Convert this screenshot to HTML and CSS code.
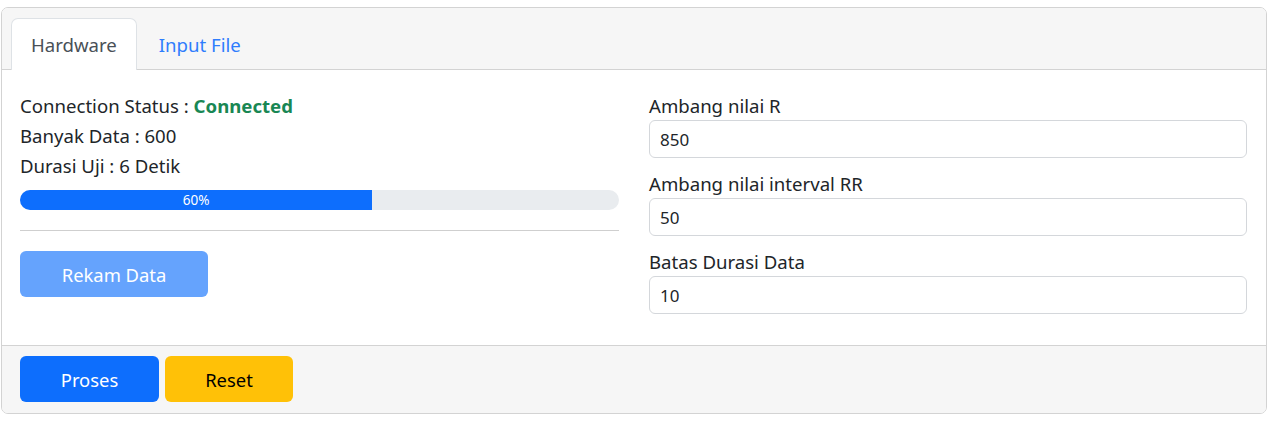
FILE: index.html
```html
<!DOCTYPE html>
<html lang="id">
<head>
<meta charset="utf-8">
<title>Hardware</title>
<link rel="stylesheet" href="styles.css">
</head>
<body>
<div class="card">
  <div class="card-header">
    <ul class="tabs">
      <li><a class="tab active" href="#">Hardware</a></li>
      <li><a class="tab" href="#">Input File</a></li>
    </ul>
  </div>
  <div class="card-body">
    <div class="col">
      <div class="line">Connection Status : <span class="ok">Connected</span></div>
      <div class="line">Banyak Data : 600</div>
      <div class="line">Durasi Uji : 6 Detik</div>
      <div class="progress"><div class="progress-bar" style="width:58.8%">60%</div></div>
      <hr class="divider">
      <button class="btn btn-primary btn-rekam disabled" type="button">Rekam Data</button>
    </div>
    <div class="col">
      <label class="label" for="r">Ambang nilai R</label>
      <input class="input" id="r" type="text" value="850">
      <label class="label" for="rr">Ambang nilai interval RR</label>
      <input class="input" id="rr" type="text" value="50">
      <label class="label" for="dur">Batas Durasi Data</label>
      <input class="input" id="dur" type="text" value="10">
    </div>
  </div>
  <div class="card-footer">
    <button class="btn btn-primary btn-proses" type="button">Proses</button>
    <button class="btn btn-warning btn-reset" type="button">Reset</button>
  </div>
</div>
</body>
</html>
```
FILE: styles.css
```css
* { box-sizing: border-box; }
body {
  margin: 7px 16px 0 1px;
  font-family: "Noto Sans", "Open Sans", sans-serif;
  font-size: 18.6px;
  color: #212529;
  background: #fff;
}
.card {
  width: 1266px;
  border: 1px solid #d3d3d3;
  border-radius: 7px;
  overflow: hidden;
}
.card-header {
  background: #f6f6f6;
  border-bottom: 1px solid #d3d3d3;
  padding: 10px 9px 0;
}
.tabs {
  list-style: none;
  margin: 0 0 -1px;
  padding: 0;
  display: flex;
  gap: 2px;
}
.tab {
  display: block;
  height: 51px;
  line-height: 51px;
  padding: 0 19px;
  border: 1px solid transparent;
  border-bottom: 0;
  border-radius: 7px 7px 0 0;
  text-decoration: none;
  color: #2f7dfd;
  font-size: 18.6px;
}
.tab.active {
  background: #fff;
  border-color: #dee2e6;
  color: #495057;
  height: 52px;
}
.card-body {
  display: grid;
  grid-template-columns: 599px 598px;
  gap: 30px;
  padding: 20px 18px 31px;
}
.col { display: flex; flex-direction: column; align-items: stretch; }
.line { line-height: 31px; height: 30px; }
.ok { color: #198754; font-weight: 700; }
.progress {
  margin-top: 10px;
  height: 20px;
  background: #e9ecef;
  border-radius: 10px;
  overflow: hidden;
  display: flex;
}
.progress-bar {
  background: #0d6efd;
  color: #fff;
  font-size: 13.5px;
  line-height: 21px;
  text-align: center;
}
.divider {
  margin: 20px 0;
  border: 0;
  border-top: 1px solid #cfcfcf;
  height: 0;
}
.btn {
  font-family: inherit;
  font-size: 18.4px;
  height: 46px;
  padding: 0;
  border: 0;
  border-radius: 6px;
  cursor: pointer;
  text-align: center;
}
.btn-rekam { width: 188px; }
.btn-proses { width: 139px; }
.btn-reset { width: 128px; }
.col .btn { align-self: flex-start; }
.btn-primary { background: #0d6efd; color: #fff; }
.btn-primary.disabled { background: #65a3fd; }
.btn-warning { background: #ffc107; color: #000; }
.label { line-height: 31px; height: 30px; }
.input {
  height: 38px;
  margin-bottom: 10px;
  border: 1px solid #d4d7db;
  border-radius: 6px;
  padding: 0 10px;
  font-family: inherit;
  font-size: 17px;
  color: #212529;
}
.input:last-child { margin-bottom: 0; }
.card-footer {
  background: #f6f6f6;
  border-top: 1px solid #d3d3d3;
  padding: 10px 18px 11px;
  display: flex;
  gap: 6px;
}
```
